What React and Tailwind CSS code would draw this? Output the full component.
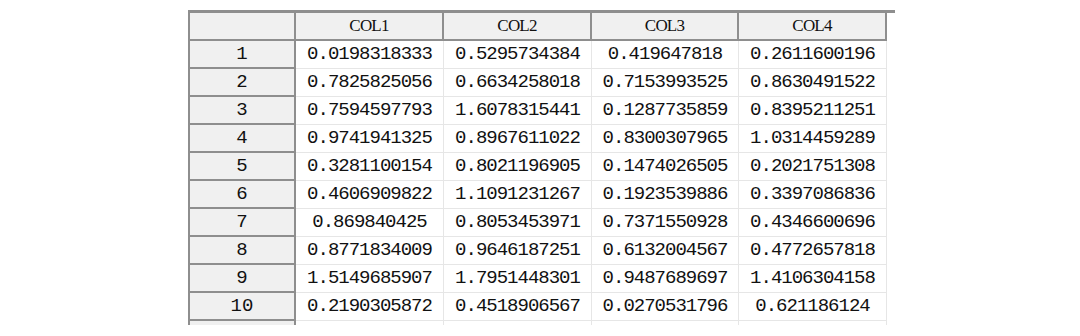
import React from 'react';

const rows = [
  ['0.0198318333', '0.5295734384', '0.419647818', '0.2611600196'],
  ['0.7825825056', '0.6634258018', '0.7153993525', '0.8630491522'],
  ['0.7594597793', '1.6078315441', '0.1287735859', '0.8395211251'],
  ['0.9741941325', '0.8967611022', '0.8300307965', '1.0314459289'],
  ['0.3281100154', '0.8021196905', '0.1474026505', '0.2021751308'],
  ['0.4606909822', '1.1091231267', '0.1923539886', '0.3397086836'],
  ['0.869840425', '0.8053453971', '0.7371550928', '0.4346600696'],
  ['0.8771834009', '0.9646187251', '0.6132004567', '0.4772657818'],
  ['1.5149685907', '1.7951448301', '0.9487689697', '1.4106304158'],
  ['0.2190305872', '0.4518906567', '0.0270531796', '0.621186124'],
];

const cols = ['COL1', 'COL2', 'COL3', 'COL4'];
const grid = 'grid grid-cols-[106px_148px_148px_147px_148px]';

export default function App() {
  return (
    <div className="w-[1080px] h-[336px] bg-white overflow-hidden pt-[10px] pl-[188px] font-['Liberation_Mono',monospace] text-[#111]">
      <div className="w-[707px] border-t-[3px] border-[#8e8e8e]">
        <div className="w-[699px] border-l-2 border-[#8e8e8e]">
          <div className={grid}>
            <div className="h-[28px] bg-[#f0f0f0] border-r-2 border-b-2 border-[#8e8e8e]" />
            {cols.map((c) => (
              <div
                key={c}
                className="h-[28px] bg-[#f0f0f0] border-r-2 border-b-2 border-[#8e8e8e] flex items-center justify-center text-[17px] tracking-[-0.8px] font-['Liberation_Serif',serif]"
              >
                {c}
              </div>
            ))}
          </div>
          {rows.map((r, i) => (
            <div key={i} className={grid}>
              <div className="h-[28px] bg-[#f0f0f0] border-r-2 border-b-2 border-[#8e8e8e] flex items-center justify-center text-[19px]">
                {i + 1}
              </div>
              {r.map((v, j) => (
                <div
                  key={j}
                  className="h-[28px] border-r border-b border-[#e6e6e6] flex items-center justify-center text-[19px] tracking-[-1px]"
                >
                  {v}
                </div>
              ))}
            </div>
          ))}
          <div className={grid}>
            <div className="h-[4px] bg-[#f0f0f0] border-r-2 border-[#8e8e8e]" />
            {cols.map((c) => (
              <div key={c} className="h-[4px] border-r border-[#e6e6e6]" />
            ))}
          </div>
        </div>
      </div>
    </div>
  );
}
